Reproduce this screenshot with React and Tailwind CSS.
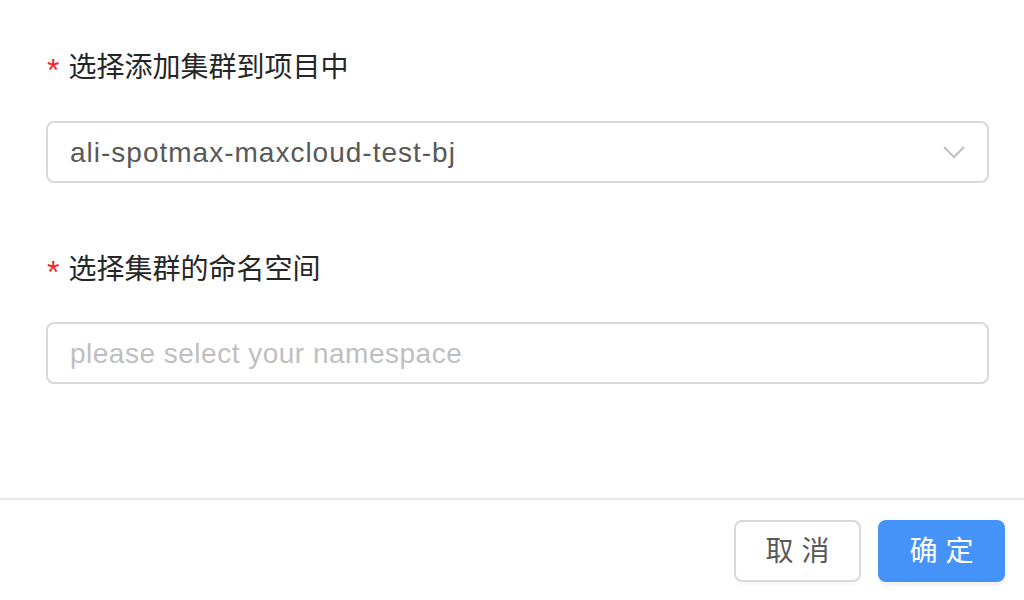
export default function App() {
  const font = {
    fontFamily: '"Liberation Sans", "Noto Sans CJK SC", sans-serif',
  };

  return (
    <div className="w-[1024px] h-[600px] bg-white flex flex-col" style={font}>
      {/* BODY */}
      <div className="flex-1 pl-[46px] pr-[35px] pt-[48px]">
        <div className="h-[40px] flex items-center text-[28px] text-[#262626]">
          <span className="text-[#f5222d] text-[32px] leading-none mr-[9px] ml-[1px] mt-[4px]">*</span>
          <span>选择添加集群到项目中</span>
        </div>

        <div className="mt-[33px] h-[62px] border-2 border-[#d9d9d9] rounded-[8px] flex items-center justify-between pl-[22px] pr-[22px]">
          <span className="text-[28px] tracking-[1px] text-[#595959] mt-[2px]">
            ali-spotmax-maxcloud-test-bj
          </span>
          <svg width="22" height="14" viewBox="0 0 22 14" fill="none">
            <path d="M1 2 L11 12 L21 2" stroke="#bfbfbf" strokeWidth="2" />
          </svg>
        </div>

        <div className="mt-[67px] h-[40px] flex items-center text-[28px] text-[#262626]">
          <span className="text-[#f5222d] text-[32px] leading-none mr-[9px] ml-[1px] mt-[4px]">*</span>
          <span>选择集群的命名空间</span>
        </div>

        <div className="mt-[32px] h-[62px] border-2 border-[#d9d9d9] rounded-[8px] flex items-center pl-[22px]">
          <span className="text-[28px] tracking-[0.5px] text-[#bfbfbf] mt-[2px]">
            please select your namespace
          </span>
        </div>
      </div>

      {/* FOOTER */}
      <div className="border-t-2 border-[#e8e8e8] h-[102px] flex justify-end items-start pt-[20px] pr-[19px] gap-[17px]">
        <button className="w-[127px] h-[62px] border-2 border-[#d9d9d9] rounded-[8px] bg-white text-[28px] text-[#595959] shadow-[0_4px_0_rgba(0,0,0,0.02)] tracking-[8px] pl-[8px] pt-[2px]">
          取消
        </button>
        <button className="w-[127px] h-[62px] rounded-[8px] bg-[#4593f8] text-[28px] text-white shadow-[0_4px_0_rgba(0,0,0,0.045)] tracking-[8px] pl-[8px] pt-[2px]">
          确定
        </button>
      </div>
    </div>
  );
}
